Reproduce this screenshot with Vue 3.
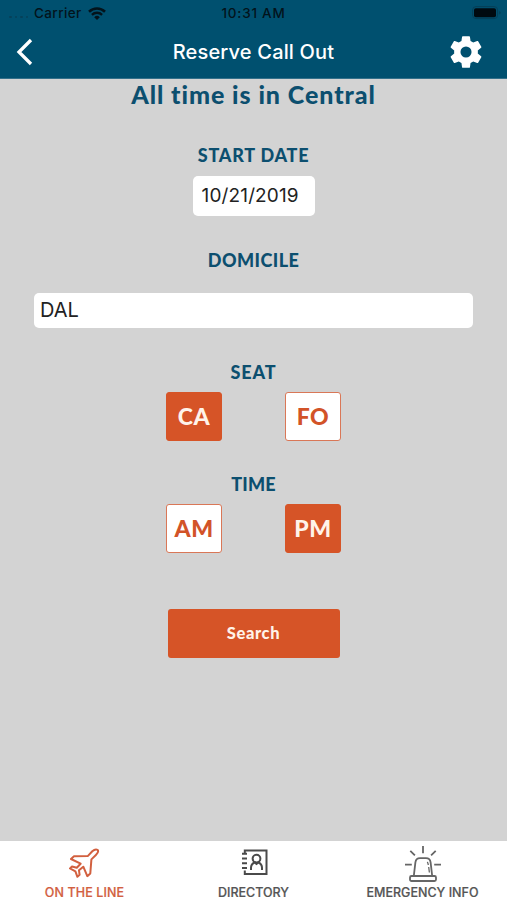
<script setup>
import { ref } from 'vue'

const startDate = ref('10/21/2019')
const domicile = ref('DAL')
const seat = ref('CA')
const time = ref('PM')
</script>

<template>
  <div class="screen">
    <header class="top">
      <div class="status">
        <div class="carrier">
          <span class="dots"><i></i><i></i><i></i><i></i></span>
          <span class="carrier-name">Carrier</span>
          <svg class="wifi" width="18" height="13" viewBox="0 0 18 13">
            <path d="M1 4.7a11.5 11.5 0 0 1 16 0" fill="none" stroke="#03131b" stroke-width="2.6" />
            <path d="M3.9 7.8a7.4 7.4 0 0 1 10.2 0" fill="none" stroke="#03131b" stroke-width="2.3" />
            <path d="M9 13 6.2 10.2a4 4 0 0 1 5.6 0z" fill="#03131b" />
          </svg>
        </div>
        <span class="clock">10:31 AM</span>
        <svg class="battery" width="30" height="14" viewBox="0 0 30 14">
          <rect x=".6" y=".6" width="25" height="12" rx="3.4" fill="none" stroke="#053f58" stroke-width="1" />
          <rect x="2" y="2.3" width="22" height="9" rx="1.8" fill="#000a10" />
          <path d="M27.2 5v3.4q1.5-.5 1.5-1.7T27.2 5z" fill="#053f58" />
        </svg>
      </div>
      <nav class="bar">
        <svg class="back" width="18" height="28" viewBox="0 0 18 28">
          <path d="M16 2 4 14l12 12" fill="none" stroke="#fff" stroke-width="3.3" />
        </svg>
        <h1 class="title">Reserve Call Out</h1>
        <svg class="gear" width="38" height="38" viewBox="0 0 24 24">
          <path fill="#fff" d="M19.43 12.98c.04-.32.07-.64.07-.98s-.03-.66-.07-.98l2.11-1.65c.19-.15.24-.42.12-.64l-2-3.46c-.12-.22-.39-.3-.61-.22l-2.49 1c-.52-.4-1.08-.73-1.69-.98l-.38-2.65C14.46 2.18 14.25 2 14 2h-4c-.25 0-.46.18-.49.42l-.38 2.65c-.61.25-1.17.59-1.69.98l-2.49-1c-.23-.09-.49 0-.61.22l-2 3.46c-.13.22-.07.49.12.64l2.11 1.65c-.04.32-.07.65-.07.98s.03.66.07.98l-2.11 1.65c-.19.15-.24.42-.12.64l2 3.46c.12.22.39.3.61.22l2.49-1c.52.4 1.08.73 1.69.98l.38 2.65c.03.24.24.42.49.42h4c.25 0 .46-.18.49-.42l.38-2.65c.61-.25 1.17-.59 1.69-.98l2.49 1c.23.09.49 0 .61-.22l2-3.46c.12-.22.07-.49-.12-.64zM12 15.5A3.5 3.5 0 1 1 12 8.5a3.5 3.5 0 0 1 0 7z" />
        </svg>
      </nav>
    </header>

    <main class="form">
      <h2 class="notice">All time is in Central</h2>
      <h3 class="label start">START DATE</h3>
      <div class="date">{{ startDate }}</div>
      <h3 class="label dom">DOMICILE</h3>
      <div class="field">{{ domicile }}</div>
      <h3 class="label seat">SEAT</h3>
      <div class="choices">
        <button v-for="s in ['CA', 'FO']" :key="s" :class="['choice', { on: seat === s }]" @click="seat = s">{{ s }}</button>
      </div>
      <h3 class="label time">TIME</h3>
      <div class="choices">
        <button v-for="t in ['AM', 'PM']" :key="t" :class="['choice', { on: time === t }]" @click="time = t">{{ t }}</button>
      </div>
      <button class="search">Search</button>
    </main>

    <footer class="tabs">
      <div class="tab active">
        <svg width="32" height="34" viewBox="0 0 32 34" fill="none" stroke="#d2603f" stroke-width="2" stroke-linejoin="round">
          <path d="M28.8 4C27 2.900 25 3.700 23.300 5.300L19 9.900 5 10.300 2 13l9.600 4.700L7.800 21.700 3 20.500 1 22.400l5.400 2.900 2 5.500 2.200-2-.6-4.500 4.300-3.600 4 9.500 3-2.800L22.400 13.400l4.500-4.400C28.600 7.300 29.700 5.500 28.800 4z" />
        </svg>
        <span class="tab-name line">ON THE LINE</span>
      </div>
      <div class="tab">
        <svg width="32" height="32" viewBox="0 0 32 32" fill="none" stroke="#4a4a4a" stroke-width="2">
          <path d="M6.800 8.500V4.500h21.700v23.500H6.800v-3.500M4 7.800h5M4 12.400h5M4 17.200h5M4 22h5" />
          <circle cx="18.500" cy="12.600" r="3.900" />
          <path d="M13 24v-2.200c0-2.600 1.200-4.300 3.600-5.300l1.900 1.400 1.900-1.400c2.400 1 3.600 2.700 3.600 5.300V24" />
        </svg>
        <span class="tab-name dir">DIRECTORY</span>
      </div>
      <div class="tab">
        <svg width="40" height="38" viewBox="0 0 40 38" fill="none" stroke="#666" stroke-width="1.8">
          <path d="M20 0v7.200M7.300 4.800l4.600 4.500M32.700 4.800l-4.600 4.500M2 18.600h6.800M31.200 18.600H38" />
          <path d="M10.800 30 12.400 16.300c.4-3 2-4.200 4.600-4.200h6c2.600 0 4.200 1.200 4.600 4.200L29.200 30" />
          <rect x="7" y="30" width="26" height="5" rx="1.500" />
          <path d="M24.200 16c.8.700 1 2 1.100 3M25.700 21l.7 5.500" stroke-width="1.300" />
        </svg>
        <span class="tab-name emer">EMERGENCY INFO</span>
      </div>
    </footer>
  </div>
</template>

<style>
body { margin: 0; }
</style>

<style scoped>
* { box-sizing: border-box; }
h1, h2, h3 { margin: 0; white-space: nowrap; }
svg { display: block; flex: none; }
button { padding: 0; font-family: inherit; }

.screen {
  width: 507px;
  height: 900px;
  display: flex;
  flex-direction: column;
  overflow: hidden;
  background: #d3d3d3;
  font-family: Lato, sans-serif;
}
.top {
  height: 79px;
  flex: none;
  background: #00506f;
  border-bottom: 1px solid #33708a;
  font-family: Inter, sans-serif;
}
.status {
  height: 26px;
  display: grid;
  grid-template-columns: 1fr auto 1fr;
  align-items: center;
  padding: 0 5px 0 9px;
  color: #03131b;
  font-size: 13.5px;
  font-weight: 500;
}
.carrier { display: flex; align-items: center; }
.dots { display: flex; gap: 3px; width: 25px; padding-top: 8px; }
.dots i { width: 2.5px; height: 2px; border-radius: 1px; background: #064059; }
.carrier-name { width: 54px; letter-spacing: .4px; }
.clock { letter-spacing: .75px; margin-right: 4px; }
.battery { justify-self: end; }
.bar {
  height: 52px;
  display: grid;
  grid-template-columns: 1fr auto 1fr;
  align-items: center;
  padding: 0 22px 0 15px;
}
.title { color: #fff; font-size: 20px; font-weight: 500; letter-spacing: .17px; line-height: 26px; margin-left: 7px; }
.gear { justify-self: end; }

.form { flex: 1; display: flex; flex-direction: column; align-items: center; }
.notice { height: 31px; margin-bottom: 3px; line-height: 31px; font-size: 25px; font-weight: 900; color: #0c4f6f; letter-spacing: .93px; }
.label { height: 20px; line-height: 20px; font-size: 18px; font-weight: 900; color: #0c4f6f; }
.start { margin-top: 32px; letter-spacing: .75px; }
.date {
  width: 122px;
  height: 40px;
  margin-top: 11px;
  padding-left: 9px;
  border-radius: 5px;
  background: #fff;
  color: #222;
  font: 400 19px/40px Inter, sans-serif;
  letter-spacing: .15px;
}
.dom { margin-top: 34px; letter-spacing: .45px; }
.field {
  width: 439px;
  height: 35px;
  margin-top: 23px;
  padding-left: 6px;
  border-radius: 5px;
  background: #fff;
  color: #222;
  font: 400 20px/35px Inter, sans-serif;
}
.seat { margin-top: 34px; letter-spacing: .9px; }
.choices { display: flex; gap: 63px; margin-top: 10px; }
.choice {
  width: 56px;
  height: 49px;
  padding-bottom: 2px;
  border: 1.5px solid #d97757;
  border-radius: 3px;
  background: #fff;
  color: #d25328;
  font-size: 23px;
  font-weight: 900;
  letter-spacing: .5px;
}
.choice.on { background: #d65427; border-color: #d65427; color: #fff3e9; }
.time { margin-top: 33px; letter-spacing: .2px; }
.search {
  width: 172px;
  height: 49px;
  margin-top: 56px;
  padding-bottom: 2px;
  border: 0;
  border-radius: 3px;
  background: #d65427;
  color: #fff3e9;
  font-size: 16.5px;
  font-weight: 900;
  letter-spacing: .6px;
}

.tabs {
  height: 59px;
  flex: none;
  display: grid;
  grid-template-columns: repeat(3, 1fr);
  background: #fff;
  font-family: Inter, sans-serif;
}
.tab { display: flex; flex-direction: column; align-items: center; color: #555; }
.tab svg { margin-top: 5px; }
.tab-name { margin: auto 0 1px; height: 18px; line-height: 18px; font-size: 12.5px; font-weight: 500; white-space: nowrap; -webkit-text-stroke: .2px currentColor; }
.tab.active { color: #d2603f; }
.line { letter-spacing: .1px; }
</style>
